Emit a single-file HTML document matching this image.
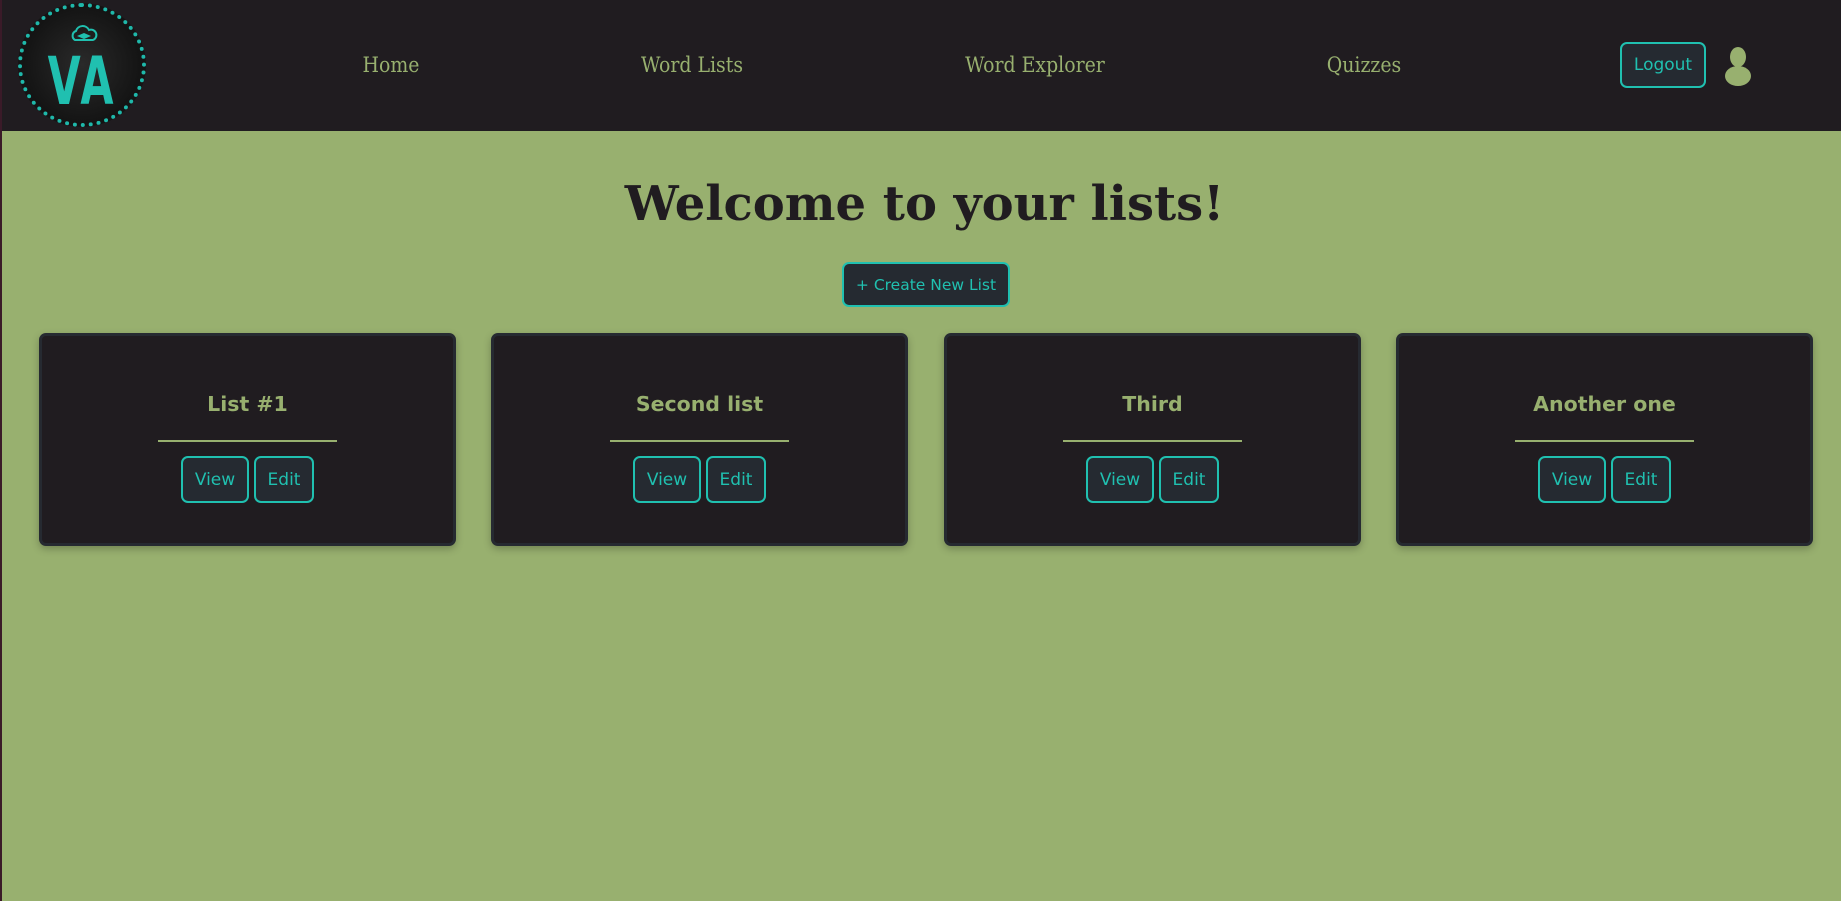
<!DOCTYPE html>
<html><head><meta charset="utf-8"><style>
*{margin:0;padding:0;box-sizing:border-box}
body{width:1841px;height:901px;overflow:hidden;background:#98b06f;position:relative;font-family:"DejaVu Sans","Liberation Sans",sans-serif}
.lb{position:absolute;left:0;top:0;width:2px;height:901px;background:#3a1a28}
header{position:absolute;left:0;top:0;width:1841px;height:131px;background:#201c20}
.nav{position:absolute;top:53px;font-family:"DejaVu Serif",serif;font-stretch:condensed;font-size:21px;color:#98b06f;transform:translateX(-50%);white-space:nowrap}
.logo{position:absolute;left:18px;top:3px;width:128px;height:124px;border-radius:50%;background:radial-gradient(circle,#2a2a2a 0%,#141414 70%);border:4px dotted #1fb8aa}
.va{position:absolute;left:0;width:100%;top:42px;text-align:center;font-family:"DejaVu Sans",sans-serif;font-stretch:condensed;font-weight:bold;font-size:66px;line-height:66px;color:#20c0b0;letter-spacing:4px;transform:scaleX(.72)}
.btn{position:absolute;background:#252a31;border:2px solid #20c0b0;border-radius:7px;color:#20c0b0;font-size:17px;display:flex;align-items:center;justify-content:center;white-space:nowrap}
h1{position:absolute;left:4px;width:1841px;top:176px;text-align:center;font-family:"DejaVu Serif",serif;font-weight:bold;font-size:48px;color:#201c20}
.card{position:absolute;top:333px;width:417px;height:213px;background:#201c20;border:3px solid #262a31;border-radius:7px;box-shadow:0 3px 8px rgba(0,0,0,.25)}
.card .t{position:absolute;top:56px;width:100%;text-align:center;font-weight:bold;font-size:20.5px;color:#98b06f}
.card .ln{position:absolute;top:104px;left:116px;width:179px;height:2px;background:#98b06f}
</style></head><body>
<header>
<div class="logo"><svg style="position:absolute;left:47px;top:17px" width="30" height="22" viewBox="0 0 30 22"><path d="M6 16a5 5 0 0 1 1-9a7 7 0 0 1 13-1a5 5 0 0 1 4 10z" fill="none" stroke="#20c0b0" stroke-width="2"/><path d="M8 12l7-3 7 3-7 3z" fill="#20c0b0"/></svg><div class="va">VA</div></div>
<div class="nav" style="left:391px">Home</div>
<div class="nav" style="left:692px">Word Lists</div>
<div class="nav" style="left:1035px">Word Explorer</div>
<div class="nav" style="left:1364px">Quizzes</div>
<div class="btn" style="left:1620px;top:42px;width:86px;height:46px">Logout</div>
<svg style="position:absolute;left:1724px;top:46px" width="28" height="40" viewBox="0 0 28 40"><ellipse cx="14" cy="11" rx="8" ry="10" fill="#98b06f"/><ellipse cx="14" cy="30" rx="13" ry="10" fill="#98b06f"/></svg>
</header>
<div class="lb"></div>
<h1>Welcome to your lists!</h1>
<div class="btn" style="left:842px;top:262px;width:168px;height:45px;font-size:15.5px">+ Create New List</div>
<div class="card" style="left:39px"><div class="t">List #1</div><div class="ln"></div><div class="btn" style="left:139px;top:120px;width:68px;height:47px">View</div><div class="btn" style="left:212px;top:120px;width:60px;height:47px">Edit</div></div>
<div class="card" style="left:491px"><div class="t">Second list</div><div class="ln"></div><div class="btn" style="left:139px;top:120px;width:68px;height:47px">View</div><div class="btn" style="left:212px;top:120px;width:60px;height:47px">Edit</div></div>
<div class="card" style="left:944px"><div class="t">Third</div><div class="ln"></div><div class="btn" style="left:139px;top:120px;width:68px;height:47px">View</div><div class="btn" style="left:212px;top:120px;width:60px;height:47px">Edit</div></div>
<div class="card" style="left:1396px"><div class="t">Another one</div><div class="ln"></div><div class="btn" style="left:139px;top:120px;width:68px;height:47px">View</div><div class="btn" style="left:212px;top:120px;width:60px;height:47px">Edit</div></div>
</body></html>
